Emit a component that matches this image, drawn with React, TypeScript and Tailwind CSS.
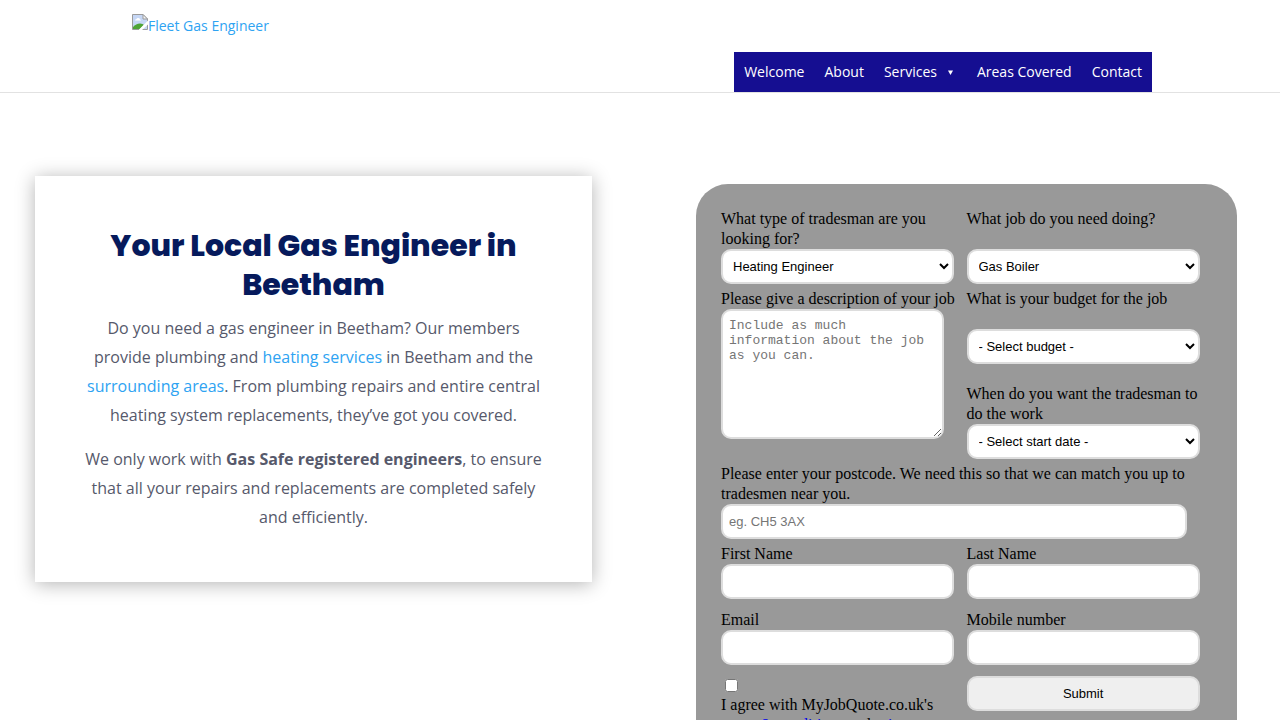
import React from "react";

const fieldClass =
  "h-[35px] w-[95%] rounded-[10px] border-2 border-[#ddd] bg-white px-1.5 font-['Liberation_Sans',sans-serif] text-[13px] text-black placeholder:text-[#757575]";

const navItems = [
  { label: "Welcome" },
  { label: "About" },
  { label: "Services", hasMenu: true },
  { label: "Areas Covered" },
  { label: "Contact" },
];

const BrokenImageIcon: React.FC = () => (
  <svg width="16" height="16" viewBox="0 0 16 16" aria-hidden="true" className="shrink-0">
    <path d="M0.5 0.5H11L15.5 5V15.5H0.5Z" fill="#c6d7f5" stroke="#9b9b9b" />
    <path d="M3 6.5Q3 5 4.5 5Q5 3.5 6.5 4Q8 4 8 5.5Q9 5.5 9 6.5Z" fill="#fff" />
    <path d="M1 15V13Q4 9.500 8 9.500Q11 9.500 12 11L8 15Z" fill="#4ea436" />
    <path d="M16 6.500L7 15.500V16H10L16 10.500Z" fill="#fff" />
    <path d="M11 0.500V5H15.500Z" fill="#f4f4f4" stroke="#9b9b9b" />
  </svg>
);

const Header: React.FC = () => (
  <header className="border-b border-[#e2e2e2]">
    <div className="mx-auto flex w-4/5 flex-col text-sm">
      <a href="#home" className="ml-1 flex h-[52px] items-start pt-3.5 text-[#2ea3f2]">
        <BrokenImageIcon />
        <span className="leading-6">Fleet Gas Engineer</span>
      </a>
      <nav className="flex h-10 self-end bg-[#150e91] text-white">
        {navItems.map((item) => (
          <a key={item.label} href="#" className="flex items-center px-2.5">
            {item.label}
            {item.hasMenu && (
              <svg width="5" height="5" viewBox="0 0 5 5" className="ml-[11px] mr-1" aria-hidden="true">
                <path d="M0 0.500H5L2.500 5Z" fill="currentColor" />
              </svg>
            )}
          </a>
        ))}
      </nav>
    </div>
  </header>
);

const IntroCard: React.FC = () => (
  <section className="mt-[83px] self-start bg-white px-[50px] py-[50px] text-center text-base leading-[29px] text-[#56596b] shadow-[0_2px_18px_0_rgba(0,0,0,0.3)]">
    <h1 className="pb-2.5 font-['Poppins','Inter',sans-serif] text-[30px] font-extrabold leading-[39px] text-[#061a5c]">
      Your Local Gas Engineer in Beetham
    </h1>
    <p className="pb-[15px]">
      Do you need a gas engineer in Beetham? Our members provide plumbing and{" "}
      <a href="#heating" className="text-[#2ea3f2]">heating services</a> in Beetham and the{" "}
      <a href="#areas" className="text-[#2ea3f2]">surrounding areas</a>. From plumbing repairs and
      entire central heating system replacements, they’ve got you covered.
    </p>
    <p>
      We only work with <strong>Gas Safe registered engineers</strong>, to ensure that all your
      repairs and replacements are completed safely and efficiently.
    </p>
  </section>
);

const QuoteForm: React.FC = () => (
  <form
    className="mt-[91px] grid grid-cols-2 content-start rounded-[32px] bg-[#999] p-[25px] font-['Liberation_Serif',serif] text-base leading-5 text-black"
    onSubmit={(e) => e.preventDefault()}
  >
    <div className="flex flex-col pb-[5px]">
      <label htmlFor="trade" className="h-10">What type of tradesman are you looking for?</label>
      <select id="trade" className={fieldClass}>
        <option>Heating Engineer</option>
      </select>
    </div>
    <div className="flex flex-col pb-[5px]">
      <label htmlFor="job" className="h-10">What job do you need doing?</label>
      <select id="job" className={fieldClass}>
        <option>Gas Boiler</option>
      </select>
    </div>

    <div className="flex flex-col">
      <label htmlFor="description">Please give a description of your job</label>
      <textarea
        id="description"
        placeholder="Include as much information about the job as you can."
        className="h-[130px] w-[91%] rounded-[10px] border-2 border-[#ddd] bg-white px-1.5 py-[7px] font-['Liberation_Mono',monospace] text-[13px] leading-[15px] placeholder:text-[#757575]"
      />
    </div>
    <div className="flex flex-col pb-[5px]">
      <label htmlFor="budget" className="h-10">What is your budget for the job</label>
      <select id="budget" className={fieldClass}>
        <option>- Select budget -</option>
      </select>
      <label htmlFor="start" className="mt-5 h-10">When do you want the tradesman to do the work</label>
      <select id="start" className={fieldClass}>
        <option>- Select start date -</option>
      </select>
    </div>

    <div className="col-span-2 flex flex-col pb-[5px]">
      <label htmlFor="postcode">
        Please enter your postcode. We need this so that we can match you up to tradesmen near you.
      </label>
      <input id="postcode" type="text" placeholder="eg. CH5 3AX" className={fieldClass} />
    </div>

    <div className="flex flex-col pb-[11px]">
      <label htmlFor="first-name">First Name</label>
      <input id="first-name" type="text" className={fieldClass} />
    </div>
    <div className="flex flex-col pb-[11px]">
      <label htmlFor="last-name">Last Name</label>
      <input id="last-name" type="text" className={fieldClass} />
    </div>
    <div className="flex flex-col pb-[11px]">
      <label htmlFor="email">Email</label>
      <input id="email" type="email" className={fieldClass} />
    </div>
    <div className="flex flex-col pb-[11px]">
      <label htmlFor="mobile">Mobile number</label>
      <input id="mobile" type="tel" className={fieldClass} />
    </div>

    <div className="flex flex-col items-start pt-[3px]">
      <input id="agree" type="checkbox" className="mb-[3px] ml-1 size-[13px]" />
      <label htmlFor="agree">
        I agree with MyJobQuote.co.uk's{" "}
        <br />
        terms <a href="#terms" className="text-[#0000ee]">&amp; conditions</a> and{" "}
        <a href="#privacy" className="text-[#0000ee]">privacy policy</a>
      </label>
    </div>
    <div>
      <button
        type="submit"
        className="h-[35px] w-[95%] rounded-[10px] border-2 border-[#ddd] bg-[#efefef] font-['Liberation_Sans',sans-serif] text-[13px]"
      >
        Submit
      </button>
    </div>
  </form>
);

const App: React.FC = () => {
  return (
    <div className="min-h-screen bg-white font-['Open_Sans',sans-serif]">
      <Header />
      <main className="grid grid-cols-[557fr_541fr] gap-[104px] pl-[35px] pr-[43px]">
        <IntroCard />
        <QuoteForm />
      </main>
    </div>
  );
};

export default App;
